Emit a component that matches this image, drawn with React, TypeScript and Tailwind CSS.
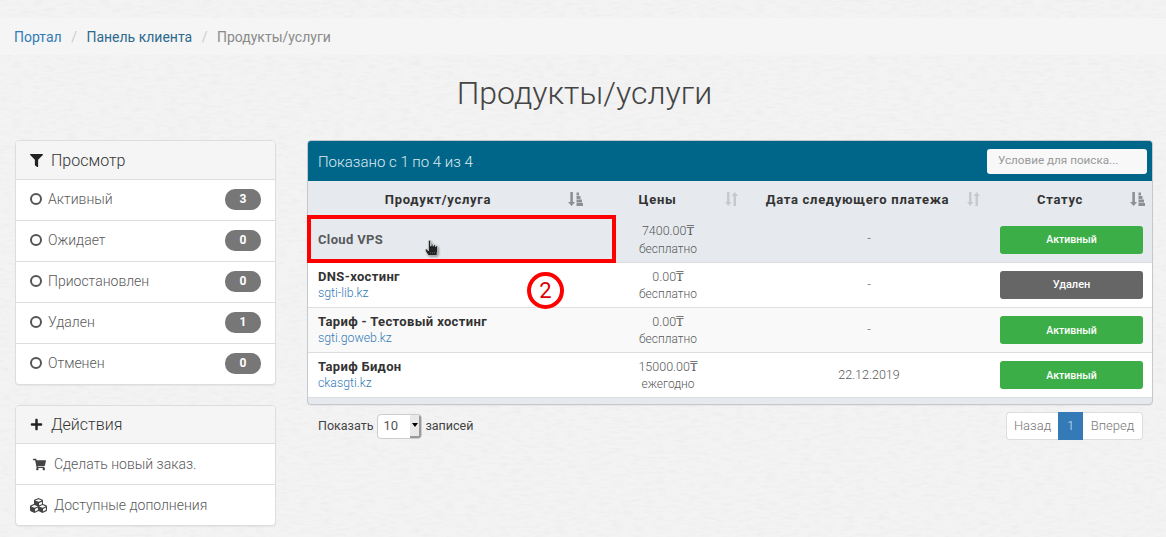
import { FaFilter, FaPlus, FaShoppingCart, FaCubes } from "react-icons/fa";

function Unsorted() {
  return (
    <svg viewBox="0 0 13 14" className="w-[13px] h-[14px] text-[#c6cacd] shrink-0" fill="currentColor">
      <path d="M2 0h2.500v10h2L3.250 14 0 10h2z" />
      <path d="M8.500 14H11V4h2L9.750 0 6.500 4h2z" />
    </svg>
  );
}

function Sorted() {
  return (
    <svg viewBox="0 0 15 14" className="w-[15px] h-[14px] text-[#8d9194] shrink-0" fill="currentColor">
      <path d="M2.300 0h2.600v10h2.200L3.600 14 0 10h2.300z" />
      <rect x="8.500" y="0.500" width="2.500" height="3" />
      <rect x="8.500" y="4" width="4" height="3" />
      <rect x="8.500" y="7.500" width="5.500" height="3" />
      <rect x="8.500" y="11" width="6.500" height="3" />
    </svg>
  );
}

function Ring() {
  return <span className="inline-block w-3 h-3 rounded-full border-2 border-[#555] mr-[6px] shrink-0" />;
}

const statuses: [string, string][] = [
  ["Активный", "3"],
  ["Ожидает", "0"],
  ["Приостановлен", "0"],
  ["Удален", "1"],
  ["Отменен", "0"],
];

const rows = [
  { name: "Cloud VPS", sub: "", price: "7400.00", cycle: "бесплатно", date: "-", status: "Активный", bg: "bg-[#e6eaee]", muted: true, h: "h-[46px]", lead: "leading-[18px]" },
  { name: "DNS-хостинг", sub: "sgti-lib.kz", price: "0.00", cycle: "бесплатно", date: "-", status: "Удален", bg: "bg-white", muted: false, h: "h-[45px]", lead: "leading-[17px]" },
  { name: "Тариф - Тестовый хостинг", sub: "sgti.goweb.kz", price: "0.00", cycle: "бесплатно", date: "-", status: "Активный", bg: "bg-[#f9f9f9]", muted: false, h: "h-[45px]", lead: "leading-[17px]" },
  { name: "Тариф Бидон", sub: "ckasgti.kz", price: "15000.00", cycle: "ежегодно", date: "22.12.2019", status: "Активный", bg: "bg-white", muted: false, h: "h-[45px]", lead: "leading-[17px]" },
];

const gridCols = "grid grid-cols-[280px_160px_242px_162px]";
const headText = "flex-1 text-center font-bold text-[13px] tracking-[0.7px] text-[#333] pt-[1px]";

export default function App() {
  return (
    <div className="relative w-[1166px] h-[537px] overflow-hidden bg-[#f3f3f3] font-['Roboto',sans-serif] font-light text-[14px] text-[#58595b]">
      <svg className="absolute inset-0 w-full h-full" aria-hidden="true">
        <filter id="fur">
          <feTurbulence type="fractalNoise" baseFrequency="0.09 0.35" numOctaves="3" seed="4" />
          <feColorMatrix values="0 0 0 0 0.55  0 0 0 0 0.55  0 0 0 0 0.55  0.9 0 0 0 -0.38" />
        </filter>
        <rect width="100%" height="100%" filter="url(#fur)" opacity="0.28" />
      </svg>

      <div className="relative">
        <div className="pt-[18px]">
          <div className="h-[37px] bg-[#f5f5f5] flex items-center pl-[14px] pt-[1px] text-[14px] font-normal">
            <a className="text-[#337ab7]">Портал</a>
            <span className="text-[#ccc] px-[9.500px]">/</span>
            <a className="text-[#2c6a8e]">Панель клиента</a>
            <span className="text-[#ccc] px-[9.500px]">/</span>
            <span className="text-[#8a8a8a]">Продукты/услуги</span>
          </div>
        </div>

        <h1 className="h-[85px] flex items-center justify-center text-[32px] font-light text-[#444] leading-none pb-[9px] pl-[3px]">Продукты/услуги</h1>

        <div className="flex items-start pl-[15px] gap-[31px]">
          <aside className="w-[261px] shrink-0 flex flex-col gap-5">
            <section className="bg-white border border-[#ddd] rounded-[4px] shadow-[0_1px_1px_rgba(0,0,0,0.05)] overflow-hidden">
              <div className="h-[39px] bg-[#f5f5f5] border-b border-[#ddd] flex items-center pl-[14px] pt-[1px] text-[16px] text-[#333]">
                <FaFilter className="w-[13px] h-[13px] text-[#222] mr-[8px]" />
                <span>Просмотр</span>
              </div>
              {statuses.map(([label, n], i) => (
                <div key={label} className={`flex items-center pl-[14px] pr-[14px] pb-[2px] ${i < 4 ? "h-[41px] border-b border-[#ddd]" : "h-[40px]"}`}>
                  <Ring />
                  <span className="flex-1">{label}</span>
                  <span className="w-9 h-[21px] rounded-[10px] bg-[#777] text-white text-[12px] font-bold flex items-center justify-center">{n}</span>
                </div>
              ))}
            </section>

            <section className="bg-white border border-[#ddd] rounded-[4px] shadow-[0_1px_1px_rgba(0,0,0,0.05)] overflow-hidden">
              <div className="h-[38px] bg-[#f5f5f5] border-b border-[#ddd] flex items-center pl-[14px] text-[16px] text-[#333]">
                <FaPlus className="w-[13px] h-[13px] text-[#222] mr-[8px]" />
                <span>Действия</span>
              </div>
              <div className="h-[41px] flex items-center pl-[17px] border-b border-[#ddd]">
                <FaShoppingCart className="w-[13px] h-[13px] text-[#444] mr-[8px]" />
                <span>Сделать новый заказ.</span>
              </div>
              <div className="h-[40px] flex items-center pl-[14px]">
                <FaCubes className="w-[17px] h-[17px] text-[#444] mr-[7px]" />
                <span>Доступные дополнения</span>
              </div>
            </section>
          </aside>

          <main className="w-[846px] shrink-0">
            <div className="border border-[#c4c8cc] rounded-[4px] overflow-hidden shadow-[0_1px_1px_rgba(0,0,0,0.05)] bg-[#e6eaee]">
              <div className="h-[40px] bg-[#006689] flex items-center justify-between pl-[10px] pr-[5px]">
                <span className="text-[#dce9ee] text-[15px] pt-[2px]">Показано с 1 по 4 из 4</span>
                <div className="w-[160px] h-[25px] bg-[#f8f8f8] rounded-[3px] flex items-center pl-[11px] text-[11.700px] text-[#999] font-normal">Условие для поиска...</div>
              </div>
              <div className={`${gridCols} h-[36px] items-center`}>
                <div className="flex items-center pl-[10px] pr-[5px]"><span className={`${headText} pr-[10px]`}>Продукт/услуга</span><Sorted /></div>
                <div className="flex items-center pl-[10px] pr-[10px]"><span className={`${headText} pr-[8px]`}>Цены</span><Unsorted /></div>
                <div className="flex items-center pl-[10px] pr-[10px]"><span className={`${headText} pr-[10px]`}>Дата следующего платежа</span><Unsorted /></div>
                <div className="flex items-center pl-[10px] pr-[7px]"><span className={`${headText} pr-[10px]`}>Статус</span><Sorted /></div>
              </div>
              {rows.map((r) => (
                <div key={r.name} className={`${gridCols} ${r.h} ${r.bg} items-center border-b border-[#ddd]`}>
                  <div className="pl-[10px] leading-[17px]">
                    <div className={`font-bold text-[13px] tracking-[0.35px] ${r.muted ? "text-[#58595b]" : "text-[#333]"}`}>{r.name}</div>
                    {r.sub && <a className="block text-[12.300px] text-[#337ab7]">{r.sub}</a>}
                  </div>
                  <div className={`text-center ${r.lead}`}>
                    <div className="text-[12.500px]">
                      {r.price}
                      <span className="font-['DejaVu_Serif',serif] font-normal text-[12px]">₸</span>
                    </div>
                    <div className="text-[12px]">{r.cycle}</div>
                  </div>
                  <div className="text-center text-[12.500px]">{r.date}</div>
                  <div className="pl-[10px] pr-[9px]">
                    {r.status === "Удален" ? (
                      <div className="h-[28px] rounded-[3px] flex items-center justify-center text-white text-[11px] font-medium bg-[#666]">{r.status}</div>
                    ) : (
                      <div className="h-[28px] pt-[1px] rounded-[3px] flex items-center justify-center text-white text-[10.500px] font-medium bg-[#3cae48]">{r.status}</div>
                    )}
                  </div>
                </div>
              ))}
              <div className="h-[6px]" />
            </div>

            <div className="flex items-center justify-between mt-[7px] pl-[11px] pr-[10px]">
              <div className="flex items-center text-[12.500px] font-normal text-[#444]">
                <span>Показать</span>
                <div className="relative ml-[4px] mr-[3px] w-[45px] h-[25px] bg-white border border-[#ccc] rounded-[4px] flex items-center pl-[5px] text-[13px] text-[#555] overflow-hidden">
                  10
                  <span className="absolute right-0 top-0 bottom-0 w-[11px] bg-[#e9e9e9] border-r-2 border-b-2 border-[#9a9a9a] flex items-center justify-center">
                    <span className="w-0 h-0 border-l-[3px] border-r-[3px] border-t-[4px] border-l-transparent border-r-transparent border-t-black" />
                  </span>
                </div>
                <span>записей</span>
              </div>
              <div className="flex items-center h-[28px] text-[13px]">
                <span className="h-full w-[52px] flex items-center justify-center bg-white border border-[#ddd] border-r-0 rounded-l-[4px] text-[#777]">Назад</span>
                <span className="h-full w-[25px] flex items-center justify-center bg-[#337ab7] text-[#cfe0ee]">1</span>
                <span className="h-full w-[60px] flex items-center justify-center bg-white border border-[#ddd] border-l-0 rounded-r-[4px] text-[#777]">Вперед</span>
              </div>
            </div>
          </main>
        </div>
      </div>

      <div className="absolute left-[307px] top-[215px] w-[309px] h-[48px] border-4 border-[#f00]" />
      <div className="absolute left-[527px] top-[272px] w-[37px] h-[37px] rounded-full border-4 border-[#f00] flex items-center justify-center text-[#d00] text-[22px] font-normal leading-none">2</div>
      <svg viewBox="0 0 16 17" className="absolute left-[425px] top-[240px] w-[16px] h-[17px]" style={{ filter: "drop-shadow(1px 1px 1px rgba(0,0,0,0.4))" }}>
        <path d="M3.500 1.200c0-1.200 2-1.200 2 0V6h.7V4.600c0-1 1.700-1 1.700 0V6h.6V5.200c0-1 1.700-1 1.700 0V6.500h.6c0-1 1.700-1 1.700 0V12c0 1.500-.5 2.500-.9 3.500H3.500C2.500 14 .8 12 .4 10.200c-.3-1.200 1-1.600 1.700-.8L3.500 11z" fill="#222" stroke="#fff" strokeWidth="0.5" />
        <path d="M5 12.800h8" stroke="#777" strokeWidth="0.8" strokeDasharray="1 1" />
      </svg>
    </div>
  );
}
